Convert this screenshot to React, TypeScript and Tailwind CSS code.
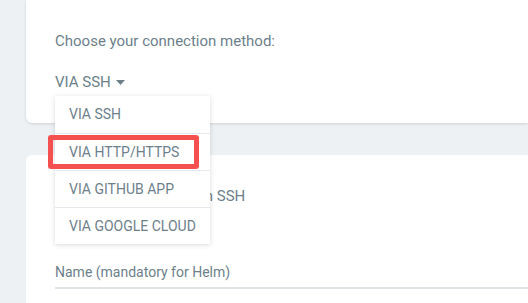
import { useState } from "react";

const methods = ["VIA SSH", "VIA HTTP/HTTPS", "VIA GITHUB APP", "VIA GOOGLE CLOUD"];

const App = () => {
  const [method, setMethod] = useState("VIA SSH");
  const [open, setOpen] = useState(true);

  return (
    <div
      className="h-[303px] w-[528px] overflow-hidden bg-[#eef1f4] pl-[26px] text-[#6d7f8b]"
      style={{ fontFamily: "Roboto, 'Liberation Sans', sans-serif" }}
    >
      {/* Connection method card */}
      <div className="relative h-[123px] rounded-bl-md bg-white pl-[29px] pt-[33px] shadow-[0_1px_3px_rgba(0,0,0,0.12)]">
        <p className="text-[15px] leading-[16px]">Choose your connection method:</p>
        <div className="relative mt-[25px]">
          <button
            className="flex items-center gap-[5px] text-[15px] leading-[16px] text-[#6d7f8b]"
            onClick={() => setOpen(!open)}
          >
            {method}
            <svg width="9" height="5" viewBox="0 0 9 5" className="mt-[1px]">
              <path d="M0 0h9L4.5 5z" fill="#6d7f8b" />
            </svg>
          </button>

          {open && (
            <div className="absolute left-0 top-[22px] z-10 w-[155px] bg-white shadow-[0_1px_5px_rgba(0,0,0,0.15)]">
              {methods.map((m, i) => (
                <div
                  key={m}
                  onClick={() => {
                    setMethod(m);
                    setOpen(false);
                  }}
                  className={`flex h-[37px] cursor-pointer items-center pl-[14px] text-[14px] text-[#6d7f8b] ${
                    i > 0 ? "border-t border-[#e6eaee]" : ""
                  }`}
                >
                  {m}
                </div>
              ))}
              {/* highlight */}
              <div className="absolute left-[-7px] top-[39px] h-[34px] w-[151px] rounded-[3px] border-[5px] border-[#f45050]" />
            </div>
          )}
        </div>
      </div>

      {/* Repo details card */}
      <div className="mt-[32px] h-[200px] rounded-tl-md bg-white pl-[29px] pt-[33px]">
        <p className="text-[15px] leading-[16px]">Connect repository with SSH</p>
        <div className="mt-[56px] border-b-2 border-[#dee3e8] pb-[3px]">
          <span className="text-[14px] leading-[16px]">Name (mandatory for Helm)</span>
        </div>
      </div>
    </div>
  );
};

export default App;
